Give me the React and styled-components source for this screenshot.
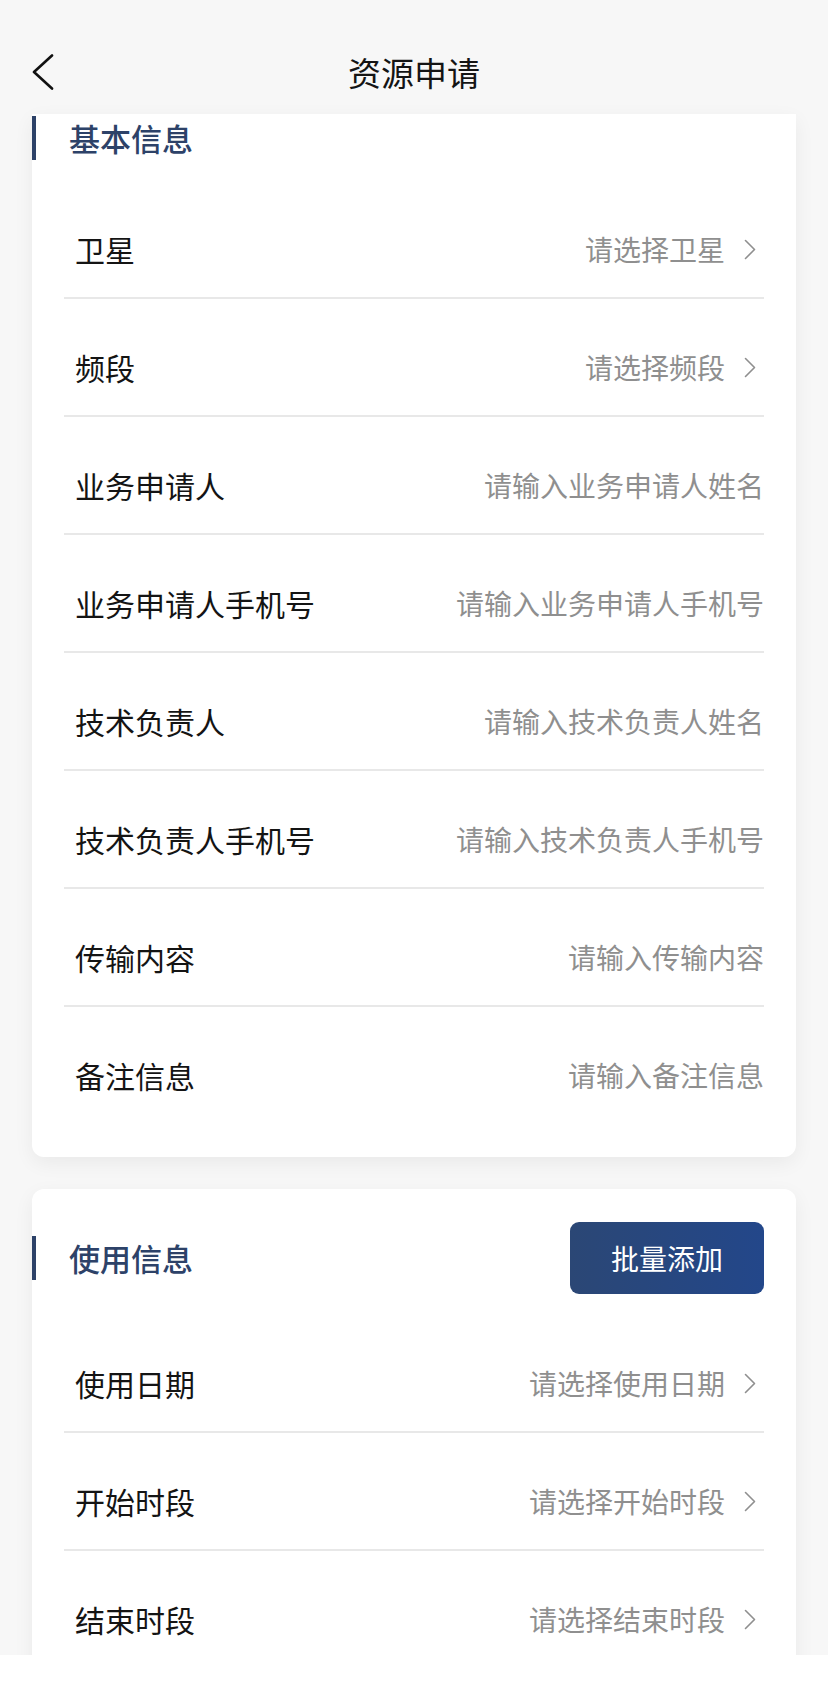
import React from 'react'
import styled, { createGlobalStyle } from 'styled-components'

const GlobalStyle = createGlobalStyle`
  html, body {
    margin: 0;
    padding: 0;
    background: #f7f7f7;
    font-family: "Noto Sans CJK SC", "Noto Sans", sans-serif;
  }
`

const Page = styled.div`
  height: 100vh;
  overflow: hidden;
  background: #f7f7f7;
  display: flex;
  flex-direction: column;
`

const Header = styled.header`
  height: 114px;
  box-sizing: border-box;
  padding-top: 30px;
  display: grid;
  grid-template-columns: 120px 1fr 120px;
  align-items: center;
  background: #f7f7f7;
  flex-shrink: 0;
  h1 {
    margin: 0;
    text-align: center;
    font-size: 33px;
    font-weight: 400;
    color: #141414;
    line-height: 84px;
  }
`

const BackButton = styled.button`
  border: none;
  background: none;
  padding: 0 0 0 32px;
  height: 84px;
  display: flex;
  align-items: center;
`

const Card = styled.section`
  margin: ${pr => (pr.$first ? '0 32px' : '32px 32px 0')};
  background: #fff;
  border-radius: ${pr => (pr.$first ? '0 0 12px 12px' : '12px')};
  box-shadow: 0 6px 20px rgba(0, 0, 0, 0.06);
  padding: ${pr => (pr.$first ? '2px' : '33px')} 32px 32px 0;
  flex-shrink: 0;
`

const SectionHead = styled.div`
  display: flex;
  align-items: center;
  justify-content: space-between;
  margin-bottom: 21px;
`

const SectionTitle = styled.h2`
  margin: 0;
  border-left: 4px solid #2d4268;
  padding-left: 33px;
  height: 44px;
  line-height: 44px;
  font-size: 31px;
  font-weight: 500;
  color: #2d4268;
`

const BatchButton = styled.button`
  width: 194px;
  height: 72px;
  border: none;
  border-radius: 9px;
  background: linear-gradient(90deg, #2b4775, #23478a);
  color: #fff;
  font-family: inherit;
  font-size: 28px;
`

const Rows = styled.div`
  display: flex;
  flex-direction: column;
  padding-left: 32px;
`

const Row = styled.div`
  margin-top: 20px;
  height: 96px;
  display: flex;
  align-items: center;
  justify-content: space-between;
  border-bottom: 2px solid ${pr => (pr.$last ? 'transparent' : '#e8e8e8')};
`

const Label = styled.span`
  padding-left: 11px;
  font-size: 30px;
  color: #141414;
`

const Value = styled.span`
  display: flex;
  align-items: center;
  font-size: 28px;
  color: #8f8f8f;
  svg {
    margin: 0 8px 0 19px;
  }
`

const BottomBar = styled.div`
  position: fixed;
  left: 0;
  right: 0;
  bottom: 0;
  height: 28px;
  background: #fff;
`

const Chevron = () => (
  <svg width="12" height="21" viewBox="0 0 12 21">
    <polyline points="1.5,1.5 10.5,10.5 1.5,19.5" fill="none" stroke="#8f8f8f" strokeWidth="1.6" strokeLinecap="round" strokeLinejoin="round" />
  </svg>
)

const basicRows = [
  { label: '卫星', value: '请选择卫星', select: true },
  { label: '频段', value: '请选择频段', select: true },
  { label: '业务申请人', value: '请输入业务申请人姓名' },
  { label: '业务申请人手机号', value: '请输入业务申请人手机号' },
  { label: '技术负责人', value: '请输入技术负责人姓名' },
  { label: '技术负责人手机号', value: '请输入技术负责人手机号' },
  { label: '传输内容', value: '请输入传输内容' },
  { label: '备注信息', value: '请输入备注信息' },
]

const useRows = [
  { label: '使用日期', value: '请选择使用日期', select: true },
  { label: '开始时段', value: '请选择开始时段', select: true },
  { label: '结束时段', value: '请选择结束时段', select: true },
]

const FieldList = ({ items, closed }) => (
  <Rows>
    {items.map((it, i) => (
      <Row key={it.label} $last={closed && i === items.length - 1}>
        <Label>{it.label}</Label>
        <Value>
          {it.value}
          {it.select && <Chevron />}
        </Value>
      </Row>
    ))}
  </Rows>
)

const App = () => {
  return (
    <Page>
      <GlobalStyle />
      <Header>
        <BackButton aria-label="返回">
          <svg width="22" height="36" viewBox="0 0 22 36">
            <polyline points="20,1.5 2,18 20,34.5" fill="none" stroke="#111" strokeWidth="2.6" strokeLinecap="round" strokeLinejoin="round" />
          </svg>
        </BackButton>
        <h1>资源申请</h1>
        <span />
      </Header>
      <Card $first>
        <SectionHead>
          <SectionTitle>基本信息</SectionTitle>
        </SectionHead>
        <FieldList items={basicRows} closed />
      </Card>
      <Card>
        <SectionHead>
          <SectionTitle>使用信息</SectionTitle>
          <BatchButton>批量添加</BatchButton>
        </SectionHead>
        <FieldList items={useRows} />
      </Card>
      <BottomBar />
    </Page>
  )
}

export default App
